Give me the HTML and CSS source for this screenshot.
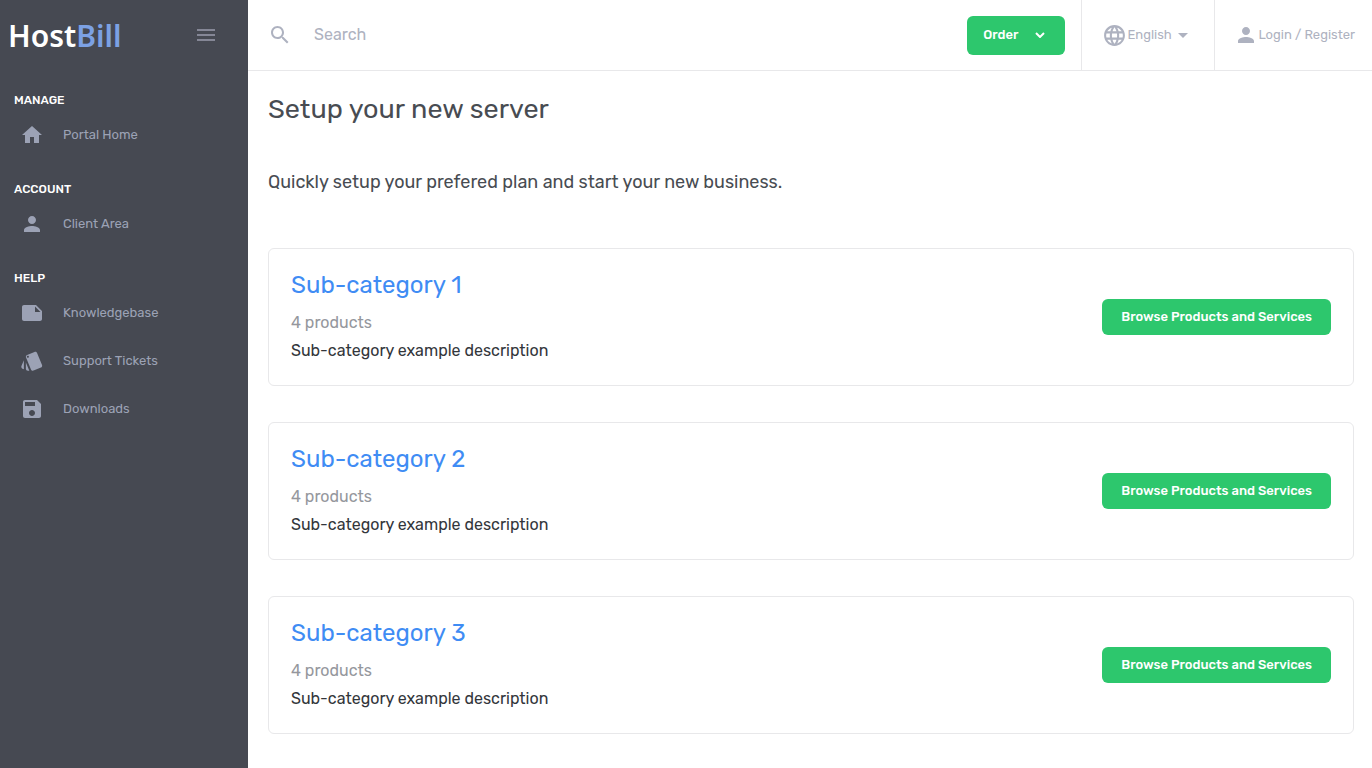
FILE: index.html
```html
<!DOCTYPE html>
<html lang="en">
<head>
<meta charset="utf-8">
<meta name="viewport" content="width=device-width, initial-scale=1">
<title>HostBill</title>
<link rel="stylesheet" href="styles.css">
</head>
<body>
<div class="layout">
  <aside class="sidebar">
    <div class="brand">
      <a class="logo" href="#">Host<span class="logo-accent">Bill</span></a>
      <button class="menu-toggle" type="button" aria-label="Toggle menu">
        <svg class="icon" viewBox="0 0 24 24"><path d="M3 6h18v2H3zM3 11h18v2H3zM3 16h18v2H3z"/></svg>
      </button>
    </div>
    <nav>
      <h2 class="nav-title">MANAGE</h2>
      <a class="nav-link" href="#"><svg class="icon" viewBox="0 0 24 24"><path d="M10 20v-6h4v6h5v-8h3L12 3 2 12h3v8z"/></svg>Portal Home</a>
      <h2 class="nav-title">ACCOUNT</h2>
      <a class="nav-link" href="#"><svg class="icon" viewBox="0 0 24 24"><path d="M12 12c2.210 0 4-1.790 4-4s-1.790-4-4-4-4 1.790-4 4 1.790 4 4 4zm0 2c-2.670 0-8 1.340-8 4v2h16v-2c0-2.660-5.330-4-8-4z"/></svg>Client Area</a>
      <h2 class="nav-title">HELP</h2>
      <a class="nav-link" href="#"><svg class="icon" viewBox="0 0 24 24"><path d="M16 4H4c-1.100 0-2 .9-2 2v12c0 1.100.9 2 2 2h16c1.100 0 2-.9 2-2v-8l-6-6zm-1 7V5.500l5.500 5.500H15z"/></svg>Knowledgebase</a>
      <a class="nav-link" href="#"><svg class="icon" viewBox="0 0 24 24"><path d="M2.530 19.650l1.340.56v-9.030l-2.430 5.860c-.41 1.020.08 2.190 1.090 2.610zm19.500-3.700L17.070 3.980c-.31-.75-1.040-1.210-1.810-1.230-.26 0-.53.04-.79.15L7.100 5.950c-.75.31-1.210 1.030-1.230 1.800-.01.27.04.54.15.8l4.960 11.970c.31.76 1.050 1.220 1.830 1.230.26 0 .52-.05.770-.15l7.360-3.050c1.020-.42 1.510-1.590 1.090-2.600zM7.880 8.750c-.55 0-1-.45-1-1s.45-1 1-1 1 .45 1 1-.45 1-1 1zm-2 11c0 1.100.9 2 2 2h1.450l-3.450-8.340v6.340z"/></svg>Support Tickets</a>
      <a class="nav-link" href="#"><svg class="icon" viewBox="0 0 24 24"><path d="M17 3H5c-1.110 0-2 .9-2 2v14c0 1.100.89 2 2 2h14c1.100 0 2-.9 2-2V7l-4-4zm-5 16c-1.660 0-3-1.340-3-3s1.340-3 3-3 3 1.340 3 3-1.340 3-3 3zm3-10H5V5h10v4z"/></svg>Downloads</a>
    </nav>
  </aside>
  <div class="page">
    <header class="topbar">
      <label class="search">
        <svg class="icon" viewBox="0 0 24 24" aria-hidden="true"><path d="M15.500 14h-.79l-.28-.27C15.410 12.590 16 11.110 16 9.500 16 5.910 13.090 3 9.500 3S3 5.910 3 9.500 5.910 16 9.500 16c1.610 0 3.090-.59 4.230-1.570l.27.28v.79l5 4.990L20.490 19l-4.990-5zm-6 0C7.010 14 5 11.990 5 9.500S7.010 5 9.500 5 14 7.010 14 9.500 11.990 14 9.500 14z"/></svg>
        <input class="search-input" type="search" placeholder="Search" aria-label="Search">
      </label>
      <button class="button button-order" type="button">Order
        <svg class="chevron" viewBox="0 0 10 6"><path d="M1 1l4 4 4-4" fill="none" stroke="currentColor" stroke-width="2"/></svg>
      </button>
      <label class="top-item language">
        <svg class="icon" viewBox="0 0 24 24" aria-hidden="true"><path d="M11.990 2C6.470 2 2 6.480 2 12s4.470 10 9.990 10C17.520 22 22 17.520 22 12S17.520 2 11.990 2zm6.930 6h-2.950c-.32-1.250-.78-2.450-1.380-3.560 1.840.63 3.370 1.910 4.330 3.560zM12 4.040c.83 1.200 1.480 2.530 1.910 3.960h-3.820c.43-1.430 1.080-2.760 1.910-3.960zM4.260 14C4.100 13.360 4 12.690 4 12s.1-1.360.26-2h3.380c-.08.66-.14 1.320-.14 2s.06 1.340.14 2H4.260zm.82 2h2.950c.32 1.250.78 2.450 1.380 3.560-1.840-.63-3.370-1.900-4.330-3.560zm2.950-8H5.080c.96-1.660 2.490-2.930 4.330-3.560C8.810 5.550 8.350 6.750 8.030 8zM12 19.960c-.83-1.200-1.480-2.530-1.910-3.960h3.820c-.43 1.430-1.080 2.760-1.910 3.960zM14.340 14H9.660c-.09-.66-.16-1.320-.16-2s.07-1.350.16-2h4.680c.09.65.16 1.320.16 2s-.07 1.340-.16 2zm.25 5.560c.6-1.110 1.060-2.310 1.380-3.560h2.950c-.96 1.650-2.490 2.930-4.330 3.560zM16.360 14c.08-.66.14-1.320.14-2s-.06-1.340-.14-2h3.380c.16.64.26 1.310.26 2s-.1 1.360-.26 2h-3.380z"/></svg>
        <select class="language-select" aria-label="Language"><option>English</option></select>
        <svg class="caret" viewBox="0 0 10 5" aria-hidden="true"><path d="M0 0h10L5 5z"/></svg>
      </label>
      <a class="top-item login" href="#">
        <svg class="icon" viewBox="0 0 24 24"><path d="M12 12c2.210 0 4-1.790 4-4s-1.790-4-4-4-4 1.790-4 4 1.790 4 4 4zm0 2c-2.670 0-8 1.340-8 4v2h16v-2c0-2.660-5.330-4-8-4z"/></svg>
        <span>Login / Register</span>
      </a>
    </header>
    <main class="content">
      <h1 class="title">Setup your new server</h1>
      <p class="lead">Quickly setup your prefered plan and start your new business.</p>
      <div class="cards">
        <section class="card">
          <div>
            <h2 class="card-title"><a href="#">Sub-category 1</a></h2>
            <p class="count">4 products</p>
            <p class="description">Sub-category example description</p>
          </div>
          <button class="button" type="button">Browse Products and Services</button>
        </section>
        <section class="card">
          <div>
            <h2 class="card-title"><a href="#">Sub-category 2</a></h2>
            <p class="count">4 products</p>
            <p class="description">Sub-category example description</p>
          </div>
          <button class="button" type="button">Browse Products and Services</button>
        </section>
        <section class="card">
          <div>
            <h2 class="card-title"><a href="#">Sub-category 3</a></h2>
            <p class="count">4 products</p>
            <p class="description">Sub-category example description</p>
          </div>
          <button class="button" type="button">Browse Products and Services</button>
        </section>
      </div>
    </main>
  </div>
</div>
</body>
</html>
```
FILE: styles.css
```css
* { box-sizing: border-box; }
body {
  margin: 0;
  font-family: Rubik, Roboto, "Liberation Sans", sans-serif;
  font-size: 16px;
  line-height: 28px;
  color: #33363b;
  background: #fff;
}
h1, h2, p { margin: 0; font-weight: 400; }
a { color: inherit; text-decoration: none; }
button, input, select { font: inherit; color: inherit; }
svg { display: block; flex: none; fill: currentColor; }
.icon { width: 24px; height: 24px; }

.layout { display: flex; min-height: 100vh; }
.sidebar { flex: none; width: 248px; background: #464952; color: #9ca2b5; }
.brand {
  display: flex;
  align-items: center;
  justify-content: space-between;
  height: 70px;
  padding: 0 30px 0 8px;
}
.logo {
  font-family: "Noto Sans", sans-serif;
  font-size: 30px;
  font-weight: 600;
  line-height: 32px;
  padding-top: 2px;
  color: #fff;
}
.logo-accent { color: #7ca1e4; }
.menu-toggle { padding: 0; border: 0; background: none; color: #858796; }
.nav-title {
  padding: 20px 14px 0;
  font-size: 12px;
  font-weight: 500;
  line-height: 21px;
  color: #fff;
}
.nav-link {
  display: flex;
  align-items: center;
  gap: 19px;
  height: 48px;
  padding: 0 20px;
  font-size: 13px;
}

.page { flex: 1; min-width: 0; }
.topbar { display: flex; align-items: center; height: 71px; border-bottom: 1px solid #e8e8ea; color: #aeb2c0; }
.search { flex: 1; display: flex; align-items: center; gap: 22px; padding: 0 20px; min-width: 0; }
.search-input { flex: 1; min-width: 0; padding: 0; border: 0; outline: 0; background: none; }
.search-input::placeholder { color: #aeb2c0; opacity: 1; }
.button {
  flex: none;
  min-height: 36px;
  padding: 0 19px;
  border: 0;
  border-radius: 6px;
  background: #2dc76d;
  color: #fff;
  font-size: 13px;
  font-weight: 500;
  line-height: 20px;
}
.button-order { display: flex; align-items: center; gap: 17px; height: 39px; margin-right: 16px; padding: 0 20px 0 16px; }
.chevron { width: 10px; height: 6px; }
.top-item { display: flex; align-items: center; height: 70px; border-left: 1px solid #e8e8ea; font-size: 13px; }
.language { padding: 0 26px 0 20px; gap: 6px; }
.language .icon { width: 25px; height: 25px; }
.language-select { appearance: none; margin-left: -6px; padding: 0; border: 0; background: none; }
.caret { width: 10px; height: 5px; }
.login { padding: 0 17px 0 19px; }

.content { padding: 20px 18px 34px 20px; }
.title { font-size: 27px; line-height: 36px; color: #484c52; }
.lead { margin-top: 40px; font-size: 18px; line-height: 30px; color: #484c52; }
.cards { display: grid; gap: 36px; margin-top: 51px; }
.card {
  display: flex;
  align-items: center;
  justify-content: space-between;
  gap: 24px;
  padding: 20px 22px;
  border: 1px solid #e8e8ea;
  border-radius: 6px;
}
.card-title { margin-bottom: 8px; font-size: 24px; line-height: 32px; color: #3f8cf4; }
.count { color: #95979d; }
```
